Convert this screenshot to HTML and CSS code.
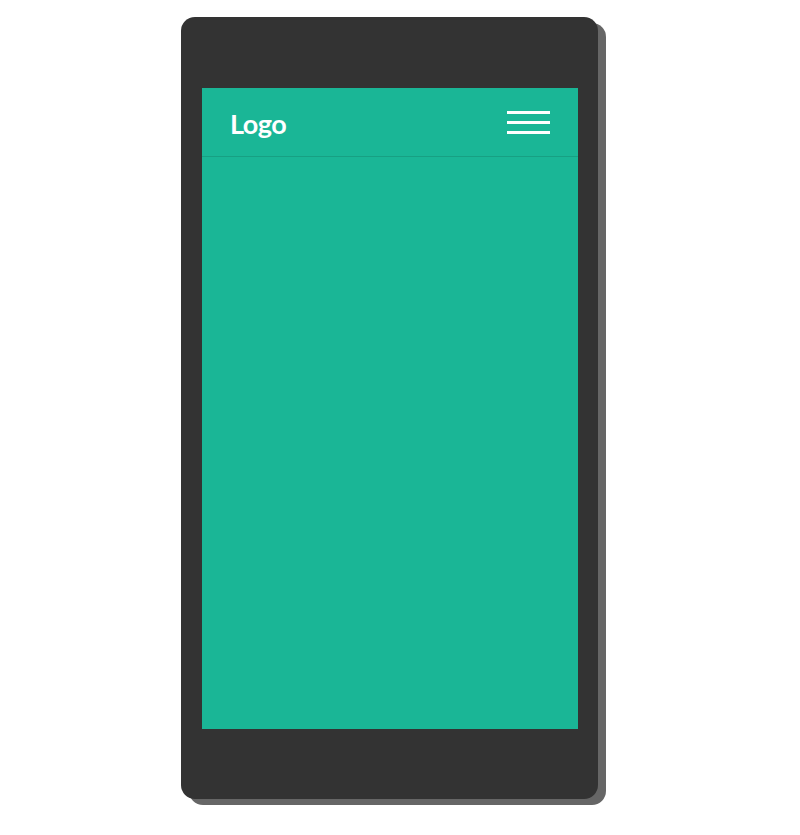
FILE: index.html
```html
<!DOCTYPE html>
<html>
<head>
<meta charset="utf-8">
<link rel="stylesheet" href="styles.css">
</head>
<body>
<div class="stage">
  <div class="phone">
    <div class="screen">
      <header class="topbar">
        <span class="logo">Logo</span>
        <span class="burger"><i></i><i></i><i></i></span>
      </header>
    </div>
  </div>
</div>
</body>
</html>
```
FILE: styles.css
```css
html, body {
  margin: 0;
  padding: 0;
  background: #fff;
}
.stage {
  width: 800px;
  height: 835px;
  padding-top: 17px;
  padding-left: 181px;
  box-sizing: border-box;
}
.phone {
  width: 417px;
  height: 782px;
  box-sizing: border-box;
  padding: 71px 20px 70px 21px;
  background: #333333;
  border-radius: 14px;
  box-shadow: 8px 6px 0 #666666;
}
.screen {
  width: 376px;
  height: 641px;
  background: #1ab696;
}
.topbar {
  height: 68px;
  border-bottom: 1px solid #17a083;
  display: flex;
  align-items: center;
  justify-content: space-between;
  padding: 0 28px 0 28px;
}
.logo {
  font-family: Lato, "Liberation Sans", sans-serif;
  font-weight: 700;
  font-size: 27px;
  letter-spacing: -0.5px;
  color: #fff;
  margin-top: 2px;
}
.burger {
  display: flex;
  flex-direction: column;
  gap: 7px;
  width: 43px;
  margin-top: 0;
}
.burger i {
  display: block;
  height: 3px;
  background: #fff;
}
```
